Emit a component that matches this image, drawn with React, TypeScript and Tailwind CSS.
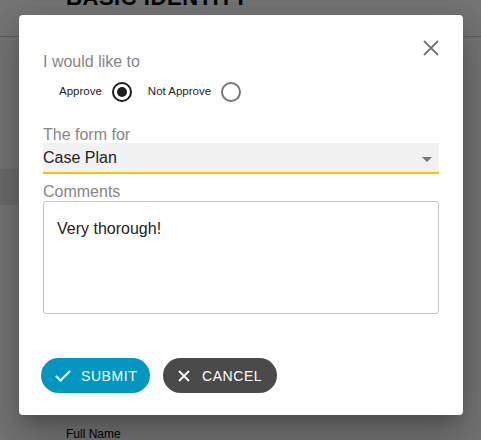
import { useState } from "react";

const FONT = "font-['Liberation_Sans',Arial,sans-serif]";

function Radio({ label, checked, onClick }: { label: string; checked: boolean; onClick: () => void }) {
  return (
    <button type="button" onClick={onClick} className="flex items-center gap-[10px]">
      <span className="text-[11.5px] text-[#222]">{label}</span>
      <span
        className={`flex h-[20px] w-[20px] items-center justify-center rounded-full border-2 ${
          checked ? "border-[#1d1d1d]" : "border-[#757575]"
        }`}
      >
        {checked && <span className="h-[10px] w-[10px] rounded-full bg-[#1d1d1d]" />}
      </span>
    </button>
  );
}

export default function App() {
  const [approve, setApprove] = useState(true);

  return (
    <div className={`relative h-[440px] w-[481px] overflow-hidden bg-white ${FONT}`}>
      {/* page behind the dialog */}
      <div className="flex flex-col">
        <div className="h-[37px] border-b border-[#d6d6d6] pl-[66px]">
          <h1 className="-mt-[19px] text-[22px] font-bold tracking-wide text-black">BASIC IDENTITY</h1>
        </div>
        <div className="mt-[132px] h-[36px] w-[18px] bg-[#ececec]" />
        <div className="mt-[220px] pl-[66px] text-[12px] text-black">Full Name</div>
      </div>

      {/* overlay */}
      <div className="absolute inset-0 bg-black/[0.54]" />

      {/* dialog */}
      <div className="absolute left-[19px] top-[15px] w-[444px] rounded-[4px] bg-white px-[24px] pb-[22px] pt-[37px] shadow-[0_11px_15px_-7px_rgba(0,0,0,0.2),0_24px_38px_3px_rgba(0,0,0,0.14),0_9px_46px_8px_rgba(0,0,0,0.12)]">
        <button type="button" className="absolute right-[23px] top-[24px] text-[#757575]" aria-label="Close">
          <svg width="18" height="18" viewBox="0 0 18 18" fill="none" stroke="currentColor" strokeWidth="1.8">
            <path d="M2 2l14 14M16 2L2 16" />
          </svg>
        </button>

        <div className="text-[16px] leading-[19px] text-[#858585]">I would like to</div>
        <div className="mt-[11px] flex items-center gap-[16px] pl-[16px]">
          <Radio label="Approve" checked={approve} onClick={() => setApprove(true)} />
          <Radio label="Not Approve" checked={!approve} onClick={() => setApprove(false)} />
        </div>

        <div className="mt-[23px] text-[16px] leading-[19px] text-[#858585]">The form for</div>
        <div className="-mt-[1px] flex h-[31px] items-center justify-between border-b-[2px] border-[#f5c400] bg-[#f1f1f1] pr-[7px]">
          <span className="text-[16px] text-[#222]">Case Plan</span>
          <svg width="10" height="5" viewBox="0 0 10 5" className="mt-[3px]">
            <path d="M0 0h10L5 5z" fill="#757575" />
          </svg>
        </div>

        <div className="mt-[8px] text-[16px] leading-[19px] text-[#858585]">Comments</div>
        <div className="h-[113px] rounded-[3px] border border-[#c4c4c4] px-[13px] pt-[17px] text-[16px] leading-[19px] text-[#222]">
          Very thorough!
        </div>

        <div className="-ml-[2px] mt-[44px] flex gap-[13px]">
          <button
            type="button"
            className="flex h-[35px] w-[109px] items-center gap-[10px] rounded-full bg-[#0396c2] pl-[14px] pt-[1px] text-[14px] tracking-[0.04em] text-white"
          >
            <svg width="16" height="12" viewBox="0 0 16 12" fill="none" stroke="currentColor" strokeWidth="2">
              <path d="M1 6l4.5 4.5L15 1" />
            </svg>
            SUBMIT
          </button>
          <button
            type="button"
            className="flex h-[35px] w-[114px] items-center gap-[12px] rounded-full bg-[#4a4a4a] pl-[15px] pt-[1px] text-[14px] tracking-[0.04em] text-white"
          >
            <svg width="12" height="12" viewBox="0 0 12 12" fill="none" stroke="currentColor" strokeWidth="1.8">
              <path d="M1 1l10 10M11 1L1 11" />
            </svg>
            CANCEL
          </button>
        </div>
      </div>
    </div>
  );
}
